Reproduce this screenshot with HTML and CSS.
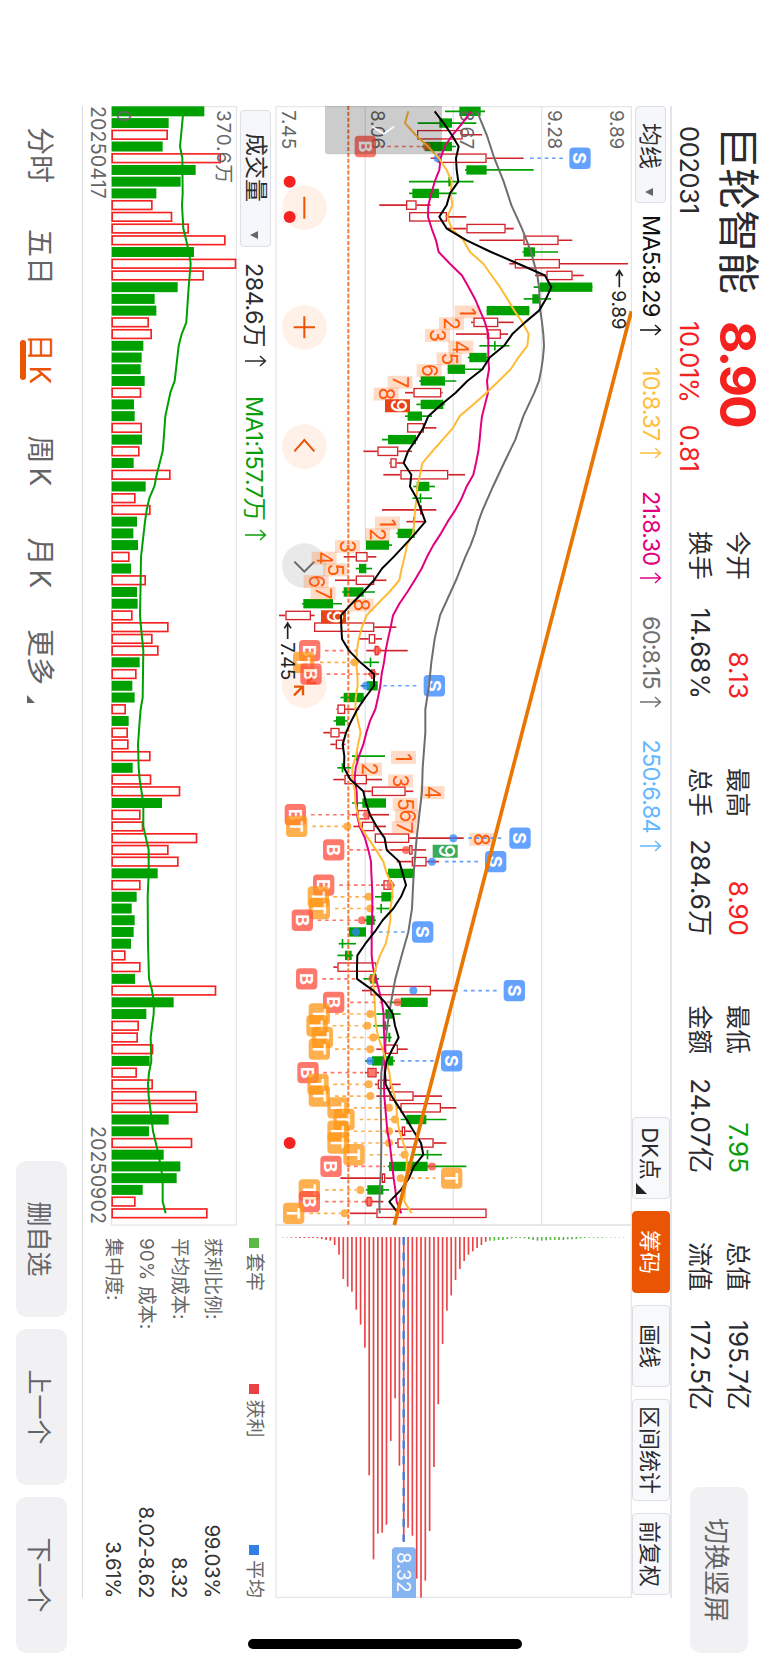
FILE: index.html
```html
<!DOCTYPE html>
<html lang="zh-CN">
<head>
<meta charset="UTF-8">
<meta name="viewport" content="width=device-width, initial-scale=1.0">
<title>巨轮智能 002031</title>
<link rel="stylesheet" href="styles.css">
</head>
<body>
<div class="device">
<div class="screen">
    <header class="header">
        <div class="quote">
            <div class="name">巨轮智能</div>
            <div class="price">8.90</div>
            <div class="code">002031</div>
            <div class="change"><span>10.01%</span><span>0.81</span></div>
        </div>
        <div class="stats">
            <div class="stat"><span>今开</span><span class="up">8.13</span></div>
            <div class="stat"><span>最高</span><span class="up">8.90</span></div>
            <div class="stat"><span>最低</span><span class="down">7.95</span></div>
            <div class="stat"><span>总值</span><span>195.7亿</span></div>
            <div class="stat"><span>换手</span><span>14.68%</span></div>
            <div class="stat"><span>总手</span><span>284.6万</span></div>
            <div class="stat"><span>金额</span><span>24.07亿</span></div>
            <div class="stat"><span>流值</span><span>172.5亿</span></div>
        </div>
        <button class="btn btn-rotate">切换竖屏</button>
    </header>

    <div class="toolbar">
        <div class="select select-ma">均线<i class="caret"></i></div>
        <div class="ma-list">
            <span class="ma ma5">MA5:8.29<svg class="arrow" viewBox="0 0 12 22"><path d="M6 22V1.5M1 7l5-5.5L11 7"/></svg></span>
            <span class="ma ma10">10:8.37<svg class="arrow" viewBox="0 0 12 22"><path d="M6 22V1.5M1 7l5-5.5L11 7"/></svg></span>
            <span class="ma ma21">21:8.30<svg class="arrow" viewBox="0 0 12 22"><path d="M6 22V1.5M1 7l5-5.5L11 7"/></svg></span>
            <span class="ma ma60">60:8.15<svg class="arrow" viewBox="0 0 12 22"><path d="M6 22V1.5M1 7l5-5.5L11 7"/></svg></span>
            <span class="ma ma250">250:6.84<svg class="arrow" viewBox="0 0 12 22"><path d="M6 22V1.5M1 7l5-5.5L11 7"/></svg></span>
        </div>
        <div class="tools">
            <button class="tool tool-dk">DK点</button>
            <button class="tool active">筹码</button>
            <button class="tool">画线</button>
            <button class="tool tool-wide">区间统计</button>
            <button class="tool">前复权</button>
        </div>
    </div>

    <svg id="price-chart" class="price-chart" viewBox="0 0 4476 1071"></svg>

    <div class="lower">
        <div class="volume">
            <div class="volume-head">
                <div class="select select-vol">成交量<i class="caret"></i></div>
                <span class="vol">284.6万<svg class="arrow" viewBox="0 0 12 22"><path d="M6 22V1.5M1 7l5-5.5L11 7"/></svg></span>
                <span class="vol vol-ma">MA1:157.7万<svg class="arrow" viewBox="0 0 12 22"><path d="M6 22V1.5M1 7l5-5.5L11 7"/></svg></span>
            </div>
            <svg id="volume-chart" class="volume-chart" viewBox="0 0 3360 378"></svg>
            <div class="dates"><span>20250417</span><span>20250902</span></div>
        </div>
        <div class="chips">
            <div class="legend">
                <span><i class="dot dot-green"></i>套牢</span>
                <span><i class="dot dot-red"></i>获利</span>
                <span><i class="dot dot-blue"></i>平均</span>
            </div>
            <div class="chip-row"><span>获利比例:</span><b>99.03%</b></div>
            <div class="chip-row"><span>平均成本:</span><b>8.32</b></div>
            <div class="chip-row"><span>90% 成本:</span><b>8.02-8.62</b></div>
            <div class="chip-row"><span>集中度:</span><b>3.61%</b></div>
        </div>
    </div>

    <footer class="footer">
        <nav class="tabs">
            <a class="tab">分时</a>
            <a class="tab">五日</a>
            <a class="tab active"><span class="cn">日</span>K</a>
            <a class="tab"><span class="cn">周</span>K</a>
            <a class="tab"><span class="cn">月</span>K</a>
            <a class="tab tab-more">更多</a>
        </nav>
        <div class="actions">
            <button class="btn">删自选</button>
            <button class="btn">上一个</button>
            <button class="btn">下一个</button>
        </div>
    </footer>
    <div class="home-bar"></div>
</div>
</div>
<script src="script.js"></script>
</body>
</html>
```

FILE: styles.css
```css
body, html {
    margin: 0;
    width: 769px;
    height: 1665px;
    overflow: hidden;
    background: #fff;
}
.device {
    position: relative;
    width: 769px;
    height: 1665px;
    overflow: hidden;
}
/* landscape layout shown on a portrait device */
.screen {
    position: relative;
    box-sizing: border-box;
    width: 1665px;
    height: 769px;
    padding-left: 106px;
    transform-origin: 0 0;
    transform: translateX(769px) rotate(90deg);
    font-family: Inter, "Noto Sans CJK SC", sans-serif;
    color: #2b2b2f;
    background: #fff;
}
button {
    font-family: inherit;
    border: none;
    padding: 0;
    margin: 0;
}
.btn {
    background: #f1f1f4;
    color: #646466;
    border-radius: 10px;
}
.up { color: #f5211f; }
.down { color: #0a9e0a; }

.header {
    display: flex;
    height: 97px;
    width: 1547px;
}
.quote {
    display: grid;
    grid-template-columns: 195px 210px;
    grid-template-rows: 62px 35px;
    align-items: center;
    padding-left: 20px;
    font-size: 25.5px;
    letter-spacing: -0.015em;
}
.name {
    font-size: 42px;
    font-weight: 400;
    line-height: 62px;
    letter-spacing: 0;
}
.price {
    font-size: 50px;
    font-weight: 700;
    line-height: 62px;
    letter-spacing: -0.04em;
    color: #f5211f;
}
.change {
    display: flex;
    gap: 22px;
    color: #f5211f;
}
.stats {
    display: grid;
    grid-template-columns: repeat(4, 168px);
    grid-auto-rows: 38px;
    column-gap: 69px;
    padding-top: 12px;
    font-size: 26px;
}
.stat {
    display: flex;
    justify-content: space-between;
    line-height: 38px;
}
.stat span:first-child {
    font-size: 24.5px;
}
.btn-rotate {
    width: 166px;
    height: 58px;
    margin: 21px 0 0 auto;
    font-size: 26px;
}

.toolbar {
    display: flex;
    width: 1492px;
    height: 40px;
    box-sizing: border-box;
    border-top: 2px solid #e6e6ea;
}
.select {
    display: flex;
    align-items: center;
    box-sizing: border-box;
    height: 31px;
    border: 1px solid #dcdfe6;
    border-radius: 4px;
    background: #f6f7fa;
    font-size: 23px;
    line-height: 28px;
}
.select-ma {
    width: 97px;
    padding-left: 16px;
    margin-top: 4px;
}
.select-vol {
    width: 137px;
    padding-left: 22px;
}
.caret {
    border: 4.5px solid transparent;
    border-top: 8px solid #666;
    border-bottom: none;
    margin-left: 19px;
    margin-top: 3px;
}
.select-vol .caret {
    margin-left: 29px;
}
.ma-list {
    display: flex;
    gap: 31.5px;
    margin-left: 12px;
    font-size: 23.5px;
    line-height: 38px;
    letter-spacing: -0.035em;
}
.ma {
    display: flex;
    align-items: center;
}
.arrow {
    width: 12px;
    height: 22px;
    margin-left: 7px;
    fill: none;
    stroke: currentColor;
    stroke-width: 1.4;
}
.ma5 { color: #111; }
.ma10 { color: #ffbe3d; }
.ma21 { color: #e2007f; }
.ma60 { color: #707070; }
.ma250 { color: #63b8ff; }
.tools {
    display: flex;
    gap: 12px;
    margin: 0 3px 0 auto;
}
.tool {
    position: relative;
    width: 82px;
    height: 38px;
    box-sizing: border-box;
    padding-bottom: 3px;
    border: 1px solid #dcdfe6;
    border-radius: 4px;
    background: #f8f9fb;
    color: #2b2b2f;
    font-size: 22px;
}
.tool-wide { width: 102px; }
.tool.active {
    background: #ea5504;
    border-color: #ea5504;
    color: #fff;
}
.tool-dk { padding-right: 9px; }
.tool-dk::after {
    content: "";
    position: absolute;
    right: 4px;
    bottom: 3px;
    border-left: 11px solid transparent;
    border-bottom: 11px solid #222;
}

.price-chart {
    display: block;
    width: 1492px;
    height: 357px;
}
.lower {
    display: flex;
    height: 192px;
    width: 1492px;
    border-bottom: 1px solid #d9d9dc;
}
.volume { width: 1120px; }
.volume-head {
    display: flex;
    align-items: center;
    height: 38px;
    padding-left: 4px;
    font-size: 23.5px;
    letter-spacing: -0.025em;
}
.select-vol { letter-spacing: 0; }
.vol {
    display: flex;
    align-items: center;
    margin-left: 16px;
}
.vol-ma {
    margin-left: 29px;
    color: #0a9e0a;
}
.vol .arrow { margin-left: 8px; }
.volume-chart {
    display: block;
    width: 1120px;
    height: 126px;
}
.dates {
    display: flex;
    justify-content: space-between;
    line-height: 27px;
    padding-right: 2px;
    font-size: 19.5px;
    letter-spacing: 0.01em;
    color: #666;
}
.chips {
    flex: 1;
    margin-left: 12px;
    font-size: 19px;
    color: #666;
}
.legend {
    display: flex;
    justify-content: space-between;
    height: 46px;
    line-height: 41px;
    align-items: flex-start;
    font-size: 19px;
}
.legend span {
    display: flex;
    align-items: center;
}
.legend span:nth-child(2) { margin-right: 14px; }
.dot {
    width: 10px;
    height: 10px;
    margin-right: 5px;
}
.dot-green { background: #5cb948; }
.dot-red { background: #ea4146; }
.dot-blue { background: #327fe6; }
.chip-row {
    display: flex;
    justify-content: space-between;
    line-height: 33px;
}
.chip-row b {
    font-weight: 400;
    font-size: 20.5px;
    letter-spacing: -0.02em;
    color: #333;
}

.footer {
    display: flex;
    justify-content: space-between;
    width: 1547px;
}
.tabs {
    display: flex;
    margin-left: -2px;
}
.tab {
    position: relative;
    width: 102px;
    height: 82px;
    line-height: 84px;
    text-align: center;
    font-size: 28px;
    color: #646466;
}
.tab .cn { margin-right: 4px; }
.tab.active { color: #ea5504; }
.tab.active::after {
    content: "";
    position: absolute;
    left: 32px;
    top: 56px;
    width: 40px;
    height: 6px;
    border-radius: 3px;
    background: #ea5504;
}
.tab-more { width: 86px; }
.tab-more::after {
    content: "";
    position: absolute;
    right: -3px;
    top: 47px;
    border-left: 8px solid transparent;
    border-bottom: 8px solid #646466;
}
.actions {
    display: flex;
    gap: 12px;
    margin-top: 15px;
}
.actions .btn {
    width: 156px;
    height: 51px;
    font-size: 25px;
}
.home-bar {
    position: absolute;
    left: 1639px;
    top: 247px;
    width: 10px;
    height: 274px;
    border-radius: 5px;
    background: #000;
}

/* charts, drawn in thirds of a pixel */
.price-chart text, .volume-chart text { font-size: 57px; fill: #666; }
.price-chart .note { fill: #222; }
.price-chart .badge { font-weight: 700; font-size: 54px; fill: #fff; text-anchor: middle; }
.price-chart .seq { font-size: 63px; fill: #ff5a0a; text-anchor: middle; }
.price-chart .seq-end { font-size: 63px; fill: #fff; font-weight: 500; text-anchor: middle; }
.price-chart .tag { fill: #fff; }
```

FILE: script.js
```js
const GREEN = '#00a000';
const RED = '#d2242b';
const STEP = 35.17;
const x = i => 16 + STEP * i;
const y = v => 1086 - v;

// color, low, body low, body high, high
const candles = `g 525 568 632 645|g 443 508 546 619|r 441 441 578 636|g 455 464 546 558|r 482 503 650 761
g 585 589 650 791|g 417 535 545 611|g 417 427 507 560|r 328 408 440 482|r 417 417 531 589
r 531 589 707 731|r 628 760 866 907|g 757 761 795 864|r 718 734 870 1074|r 795 829 908 941
g 791 809 967 967|g 761 787 807 843|g 650 650 778 778|r 603 610 685 731|r 558 650 693 714
g 628 673 677 718|g 593 598 650 659|g 533 533 585 640|g 447 452 525 559|r 405 430 514 518
g 439 452 520 524|g 405 413 456 486|r 411 411 462 499|g 336 354 438 443|r 280 322 385 426
r 358 361 380 405|r 340 391 535 585|g 430 440 478 495|g 427 450 454 486|r 336 450 456 499
r 409 429 435 465|g 379 383 434 440|g 288 288 357 366|r 221 257 293 319|g 257 267 289 306
r 195 257 313 349|g 216 221 281 315|g 96 100 189 216|r 27 46 123 134|r 132 132 313 379
r 266 296 316 336|r 289 314 326 413|g 280 300 304 327|r 293 303 315 327|g 272 290 323 323
g 211 221 281 286|r 199 202 226 268|g 191 198 225 233|r 160 181 209 225|r 181 197 222 226
g 246 258 263 345|g 202 216 220 243|r 190 223 291 336|r 280 305 407 430|g 246 277 348 348
r 246 262 298 357|r 250 275 314 348|r 314 314 418 581|r 361 417 428 468|r 380 425 470 507
g 350 354 433 433|r 333 340 366 374|g 315 334 365 370|g 319 332 336 358|g 281 289 314 318
g 237 237 288 288|g 206 216 220 258|g 202 225 245 250|r 190 202 319 321|g 280 300 320 327
r 276 301 483 563|g 366 392 473 473|g 319 346 369 392|g 310 344 348 361|g 322 355 361 365
r 319 345 384 413|g 285 306 370 375|r 285 292 320 327|r 315 323 363 392|r 319 358 431 516
r 380 391 513 559|g 392 409 469 529|r 375 395 406 425|r 375 382 491 529|g 430 471 475 516
g 353 357 473 589|r 211 335 346 370|g 288 292 340 357|r 285 290 305 340|r 240 319 650 650`
    .split(/[|\n]/).map(s => s.split(' '));

const ma5 = [494,521,545,566,558,560,565,540,530,508,530,590,663,745,825,844,828,807,765,727,702,659,637,592,557,514,475,460,438,414,401,424,420,440,453,466,436,404,371,336,312,280,245,213,214,216,237,271,312,312,286,262,244,228,218,223,222,241,280,288,300,320,344,350,388,398,408,393,370,338,314,286,262,261,261,310,345,369,375,386,367,350,345,347,365,388,410,431,453,460,432,417,393,358,385];
const ma10 = [415,405,436,474,507,530,545,542,547,532,545,580,600,640,665,690,712,733,757,776,772,745,722,686,650,610,569,549,518,487,457,450,442,440,435,433,429,411,404,395,388,358,323,290,276,266,261,258,262,263,257,256,264,272,264,258,247,247,255,256,263,272,294,318,340,350,367,367,361,361,355,347,330,318,308,312,314,315,318,325,338,348,358,363,374,379,382,388,400,411,410,408,405,403,425];
const ma21 = [604,577,548,524,512,508,494,484,475,474,485,498,506,540,576,596,615,630,645,655,655,655,657,651,654,645,636,632,629,625,618,610,590,575,556,533,513,490,471,455,434,412,388,369,362,354,347,342,335,331,324,316,300,289,280,267,257,254,260,261,261,269,285,295,303,304,306,307,307,306,305,305,305,309,318,327,336,341,341,343,344,345,344,342,343,346,349,352,359,363,367,371,376,380,394];
// index, value
const ma60 = [[0,621],[2,650],[4,673],[6,701],[8,724],[10,756],[12,783],[14,802],[15,807],[17,811],[18,816],[19,820],[20,822],[21,819],[22,814],[23,807],[24,793],[26,760],[28,736],[30,702],[32,669],[34,638],[35,625],[36,615],[37,602],[38,586],[40,558],[43,510],[45,494],[47,484],[49,477],[51,466],[53,466],[56,458],[58,456],[60,448],[62,440],[65,431],[68,426],[70,415],[72,395],[74,376],[76,363],[78,352],[80,344],[82,334],[84,332],[88,334],[90,333],[93,328],[94,329]];

// index, type, badge level, dash start, dash end, dot level
const signals = [
    [3,'B',286,330,460,470],[4,'S',930,780,883,503],[46,'B',119,165,270,322],[47,'T',101,150,245,254],
    [48,'B',123,170,300,308],[49,'S',493,340,447,288],[60,'B',76,123,280,291],[61,'T',80,127,225,232],
    [62,'S',750,595,705,550],[63,'B',191,238,400,408],[64,'S',677,525,632,486],[66,'B',161,208,350,361],
    [67,'T',145,190,285,296],[68,'T',148,195,290,301],[69,'B',97,143,265,276],[70,'S',458,305,412,258],
    [74,'B',110,157,262,307],[75,'S',733,581,688,430],[76,'B',191,240,370,383],[77,'T',148,195,290,301],
    [78,'T',141,188,282,292],[79,'T',157,204,300,310],[80,'T',148,195,290,301],[81,'S',545,392,495,301],
    [82,'B',114,160,280,306],[83,'T',144,190,286,296],[84,'T',148,195,290,301],[85,'T',204,251,347,357],
    [86,'T',222,269,365,375],[87,'T',204,251,347,357],[88,'T',204,251,347,357],[89,'T',252,299,394,404],
    [90,'B',183,230,345,486],[91,'T',545,400,497,392],[92,'T',118,165,258,271],[93,'B',118,165,285,297],
    [94,'T',71,118,212,224]
];
const signalColor = { B: '#ff4b3c', T: '#ff9614', S: '#2f83ff' };

// index, digit, level
const sequences = [
    [17,1,592],[18,2,545],[19,3,503],[20,4,573],[21,5,538],[22,6,478],[23,7,391],[24,8,349],[25,9,383,'#e84312'],
    [35,1,353],[36,2,323],[37,3,233],[38,4,163],[39,5,197],[40,6,139],[41,7,160],[42,8,274],[43,9,191,'#e84312'],
    [55,1,401],[56,2,299],[57,3,392],[58,4,487],[59,5,406],[60,6,413],[61,7,403],[62,8,636],[63,9,526,'#3cab59']
];

function line(points, color, width, flip) {
    const d = points.map(p => x(p[0]).toFixed(1) + ',' + (flip - p[1])).join(' ');
    return `<polyline points="${d}" fill="none" stroke="${color}" stroke-width="${width}" stroke-linejoin="round"/>`;
}

function seg(x1, y1, x2, y2, color, width, extra = '') {
    return `<line x1="${x1}" y1="${y1}" x2="${x2}" y2="${y2}" stroke="${color}" stroke-width="${width}" ${extra}/>`;
}

function drawPrice() {
    let s = '';
    [286, 550, 815].forEach(v => s += seg(0, y(v), 3357, y(v), '#e2e5ee', 4));
    s += `<rect x="2" y="2" width="4472" height="1066" fill="none" stroke="#dfdfe5" stroke-width="3"/>`;
    s += seg(3357, 0, 3357, 1069, '#dfdfe5', 4);

    // zoom and pan buttons
    const cy = y(103);
    [305, 664, 1022, 1379, 1739].forEach((cx, n) => {
        s += `<circle cx="${cx}" cy="${cy}" r="67" fill="${n === 3 ? '#e9e9e9' : '#fff0e8'}"/>`;
    });
    s += `<g fill="none" stroke="#ea5504" stroke-width="6">
        <path d="M272 ${cy}h66M631 ${cy}h66M664 ${cy - 32}v64"/>
        <path d="M1036 ${cy - 30}l-34 30l34 30"/>
        <path d="M1367 ${cy - 30}l30 30l-30 30" stroke="#666"/>
        <path d="M1703 ${cy - 36}l27 27M1706 ${cy - 10}h25v-26M1768 ${cy + 31}l-26 -26M1742 ${cy + 31}v-27h26" stroke-width="7"/>
    </g>`;

    candles.forEach(([c, lo, b1, b2, hi], i) => {
        const cx = x(i), color = c === 'g' ? GREEN : RED;
        b1 = +b1; b2 = +b2;
        if (c === 'g' || b2 - b1 < 8) {
            s += seg(cx, y(lo), cx, y(hi), color, 5);
            s += `<rect x="${cx - 14}" y="${y(b2)}" width="28" height="${Math.max(b2 - b1, 5)}" fill="${color}"/>`;
        } else {
            s += seg(cx, y(lo), cx, y(b1), color, 5) + seg(cx, y(b2), cx, y(hi), color, 5);
            s += `<rect x="${cx - 12.5}" y="${y(b2) + 2}" width="25" height="${b2 - b1 - 4}" fill="#fff" stroke="${color}" stroke-width="4"/>`;
        }
    });

    [['7.45', 36], ['8.06', 303], ['8.67', 569], ['9.28', 835], ['9.89', 1020]].forEach(([t, v]) => {
        s += `<text x="12" y="${y(v)}" textLength="118">${t}</text>`;
    });
    sequences.forEach(([i, n, v, bg]) => {
        const cx = x(i) + 4;
        s += `<rect x="${cx - 19.5}" y="${y(v) - 37}" width="39" height="75" fill="${bg || '#ff7828'}" fill-opacity="${bg ? 1 : 0.26}"/>`;
        s += `<text class="${bg ? 'seq-end' : 'seq'}" x="${cx}" y="${y(v) + (bg ? 20 : 23)}">${n}</text>`;
    });

    s += seg(0, y(235), 3357, y(235), '#f27a3c', 6, 'stroke-dasharray="12 5.6"');

    signals.forEach(([i, t, v, a, b, dot]) => {
        const cx = x(i), color = signalColor[t];
        s += `<g opacity="0.75">` + seg(cx, y(a), cx, y(b), color, 5, 'stroke-dasharray="11 11"');
        s += `<circle cx="${cx}" cy="${y(dot)}" r="12" fill="${color}"/>`;
        s += `<rect x="${cx - 32}" y="${y(v) - 32}" width="64" height="64" rx="12" fill="${color}"/>`;
        s += `<text class="badge" x="${cx}" y="${y(v) + 20}">${t}</text></g>`;
    });

    s += line(ma60, '#6e6e6e', 6, 1086);
    s += line(ma21.map((v, i) => [i, v]), '#e2007f', 6, 1086);
    s += line(ma10.map((v, i) => [i, v]), '#ffbb35', 6, 1086);
    s += line(ma5.map((v, i) => [i, v]), '#000', 6, 1086);
    s += seg(616, 2, 3357, y(373), '#e87600', 11);

    // highest and lowest price notes
    s += `<g fill="none" stroke="#222" stroke-width="5"><path d="M544 ${y(1048)}h-50M510 ${y(1058)}l-16 10l16 10"/>
        <path d="M1599 ${y(53)}h-48M1567 ${y(63)}l-16 10l16 10"/></g>`;
    s += `<text class="note" x="553" y="${y(1027)}" textLength="118">9.89</text>`;
    s += `<text class="note" x="1608" y="${y(32)}" textLength="115">7.45</text>`;

    [227, 333, 3111].forEach(cx => s += `<circle cx="${cx}" cy="${y(59)}" r="18" fill="#f52222"/>`);

    // collapsed side handle
    s += `<path d="M0 ${y(516)}h135q10 0 10 10v331q0 10 -10 10h-135z" fill="#000" fill-opacity="0.2"/>`;
    s += `<path d="M62 ${y(372)}l22 31l-22 34" fill="none" stroke="#fff" stroke-width="5"/>`;
    s += drawChips();
    document.getElementById('price-chart').innerHTML = s;
}

function drawChips() {
    const start = 3357 + 36;
    const low = [1, 1, 2, 2, 3, 3, 3, 3, 4, 6, 9, 11];
    const profit = [24, 53, 126, 149, 164, 218, 263, 332, 715, 967, 890, 887, 863, 612, 484, 686, 914, 872, 896, 1025, 1082, 1031, 882, 690, 502, 321, 221, 175, 129, 96, 72, 53, 43, 33, 24, 14];
    const loss = [11, 11, 9, 9, 6, 4, 3, 3, 4, 6, 9, 11, 11, 10, 9, 9, 9, 9, 7, 7, 6, 4, 3, 2, 2, 2, 2, 1, 1, 1, 1, 1];
    let s = '';
    low.concat(profit).forEach((w, k) => {
        const v = 194 + (k - 12) * 12.95;
        s += `<rect x="${start}" y="${y(v) - 2.5}" width="${w}" height="5" fill="#e94448"/>`;
    });
    loss.forEach((w, k) => {
        const v = 660 + k * 12.95;
        s += `<rect x="${start}" y="${y(v) - 2.5}" width="${w}" height="5" fill="#5cb948"/>`;
    });
    s += seg(start, y(401), start + 914, y(401), '#3d7fdc', 7, 'stroke-dasharray="24 23"');
    s += `<path d="M4476 ${y(438)}h-141q-11 0 -11 11v50q0 11 11 11h141z" fill="#86b4f0"/>`;
    s += `<text class="tag" x="4338" y="${y(380)}" textLength="122">8.32</text>`;
    return s;
}

const volumes = 'g373 g266 r264 g248 r423 g347 g302 g229 r218 r277 r327 r437 g342 r469 r372 g293 g224 g229 r207 r216 g190 g185 g182 g194 r184 g162 g164 r186 g186 r179 g161 r272 g197 r167 r212 g171 g160 g174 r149 g153 r198 g171 g173 r158 r266 r218 r236 g179 r170 g157 g164 r138 g146 r144 r146 r212 g158 r214 r301 g246 r182 r190 r352 r266 r296 g233 r182 g170 g155 g164 g161 g153 r137 r182 g165 r409 g281 g199 r177 r174 r220 g209 r171 r219 r350 r353 g266 g207 r337 g251 g301 g290 g188 r167 r383'.split(' ');
const volumeMa = [[0,310],[3,300],[4,307],[7,308],[8,306],[10,310],[12,327],[13,332],[15,326],[18,319],[19,305],[20,296],[23,284],[24,271],[26,256],[28,251],[29,248],[31,230],[32,223],[33,208],[34,200],[35,195],[38,183],[40,182],[43,180],[44,183],[46,190],[50,188],[51,182],[52,179],[54,174],[56,176],[57,179],[59,190],[61,190],[62,198],[63,206],[65,206],[67,203],[71,204],[74,207],[75,216],[76,222],[77,221],[79,212],[81,214],[82,207],[83,204],[84,206],[86,215],[87,219],[89,236],[91,248],[93,248],[94,257]];

function drawVolume() {
    let s = `<rect x="2" y="2" width="3355" height="374" fill="none" stroke="#dfdfe5" stroke-width="3"/>`;
    volumes.forEach((item, i) => {
        const top = 471 - item.slice(1), h = 376 - top;
        if (item[0] === 'g') {
            s += `<rect x="${x(i) - 15}" y="${top}" width="30" height="${h}" fill="${GREEN}"/>`;
        } else {
            s += `<rect x="${x(i) - 13}" y="${top + 2.5}" width="26" height="${h - 4}" fill="#fff" stroke="#f52222" stroke-width="5"/>`;
        }
    });
    s += `<text x="12" y="59" textLength="220">370.6万</text>`;
    s += `<text x="12" y="361" textLength="33">0</text>`;
    s += line(volumeMa, GREEN, 6, 471);
    document.getElementById('volume-chart').innerHTML = s;
}

drawPrice();
drawVolume();
```
